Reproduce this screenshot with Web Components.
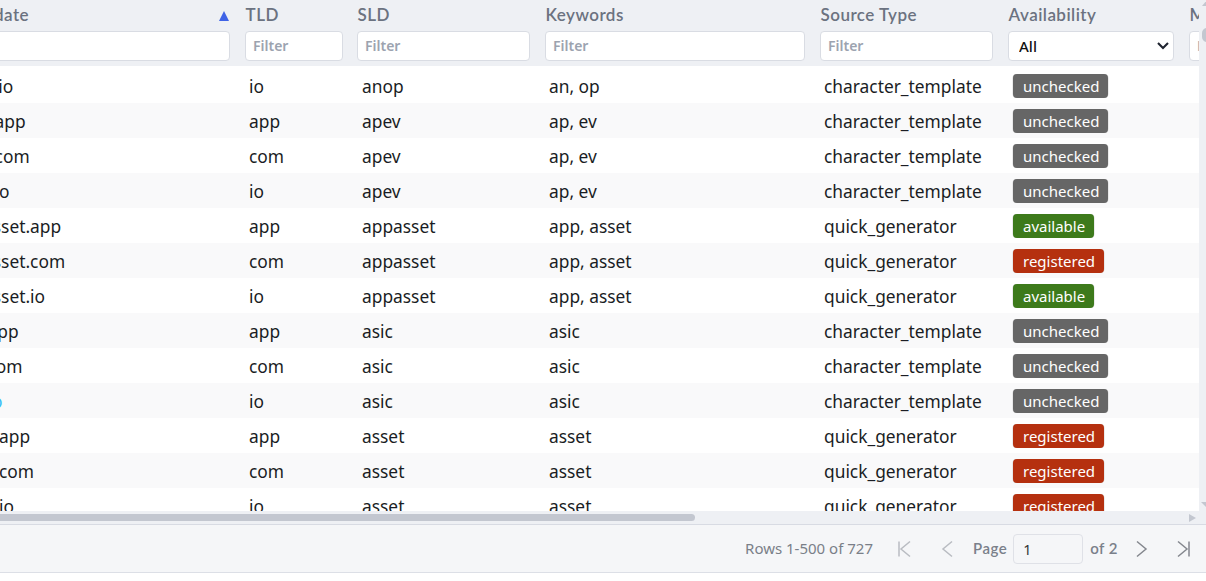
<!DOCTYPE html>
<html lang="en">
<head>
<meta charset="utf-8">
<title>Domain candidates</title>
<style>
html,body{margin:0;padding:0;background:#fff;overflow:hidden}
body{width:1206px;height:581px;font-family:"Noto Sans","Open Sans",sans-serif}
</style>
</head>
<body>
<x-app></x-app>
<script>
const COLS='297px 112px 188px 275px 188px 181px 220px';
const HEADFONT='"Lato","Noto Sans",sans-serif';

class XBadge extends HTMLElement{
  constructor(){super();const s=this.attachShadow({mode:'open'});
  s.innerHTML=`<style>
  :host{display:inline-flex;align-items:center;height:24px;padding:0 9px 0 10px;border-radius:4px;color:#fff;font-size:15px;line-height:24px;background:#666;box-sizing:border-box;box-shadow:0 0 0 .5px #d8d8d8}
  :host([kind=available]){background:#3d7a1b}
  :host([kind=registered]){background:#b5300f}
  </style><slot></slot>`;}
}
customElements.define('x-badge',XBadge);

class XRow extends HTMLElement{
  constructor(){super();this.attachShadow({mode:'open'});}
  connectedCallback(){
    const g=n=>this.getAttribute(n)||'';
    const st=g('status');
    this.shadowRoot.innerHTML=`<style>
    :host{display:grid;grid-template-columns:${COLS};height:35px;align-items:center;background:#fff;color:#1a1d24;font-size:17.35px}
    :host(:nth-child(even)){background:#f9f9fa}
    .c{padding:1px 0 0 11px;white-space:nowrap;overflow:hidden;line-height:24px}
    .hl{color:#38bdf8}
    .s{padding-left:12px}
    .b{padding-left:12px;display:flex;padding-top:0}
    </style>
    <div class="c ${g('hl')?'hl':''}">${g('domain')}</div>
    <div class="c">${g('tld')}</div>
    <div class="c s">${g('sld')}</div>
    <div class="c">${g('kw')}</div>
    <div class="c">${g('src')}</div>
    <div class="c b"><x-badge kind="${st}">${st}</x-badge></div>
    <div class="c"></div>`;
  }
}
customElements.define('x-row',XRow);

class XHeadCell extends HTMLElement{
  constructor(){super();this.attachShadow({mode:'open'});}
  connectedCallback(){
    const label=this.getAttribute('label'),sel=this.hasAttribute('select'),sort=this.hasAttribute('sorted');
    const ph=this.hasAttribute('noph')?'':'Filter';
    this.shadowRoot.innerHTML=`<style>
    :host{display:flex;flex-direction:column;padding:0 8px 0 7px;box-sizing:border-box;min-width:0;overflow:hidden}
    :host([label=TLD]){padding-right:7px}
    .t{display:flex;justify-content:space-between;align-items:center;height:30px;margin-bottom:1px;padding-left:.6px;font:600 17px/30px ${HEADFONT};letter-spacing:.45px;color:#6b7280;white-space:nowrap}
    .tri{width:0;height:0;border-left:5.5px solid transparent;border-right:5.5px solid transparent;border-bottom:10px solid #3f63e6;margin-right:1px;margin-top:1px}
    .f{position:relative;height:30px}
    input,select{display:block;width:100%;height:30px;box-sizing:border-box;border:1px solid #d9dce3;border-radius:4px;background:#fff;padding:0 7px 2px;font:600 14px "Noto Sans",sans-serif;outline:0;margin:0}
    input::placeholder{color:#9ca3af;opacity:1}
    select{appearance:none;-webkit-appearance:none;color:#111;padding:0 0 0 10px;font-size:15px;font-weight:500}
    svg{position:absolute;right:4px;top:10px;pointer-events:none}
    </style>
    <div class="t"><span>${label}</span>${sort?'<span class="tri"></span>':''}</div>
    <div class="f">${sel?`<select><option>All</option></select><svg width="14" height="10" viewBox="0 0 14 10"><path d="M2 2l5 5 5-5" fill="none" stroke="#1f2430" stroke-width="2.1"/></svg>`:`<input placeholder="${ph}">`}</div>`;
  }
}
customElements.define('x-head-cell',XHeadCell);

class XTable extends HTMLElement{
  constructor(){super();this.attachShadow({mode:'open'});}
  connectedCallback(){
    const ct='character_template',qg='quick_generator';
    const rows=[
     ['anop.io','io','anop','an, op',ct,'unchecked'],
     ['apev.app','app','apev','ap, ev',ct,'unchecked'],
     ['apev.com','com','apev','ap, ev',ct,'unchecked'],
     ['apev.io','io','apev','ap, ev',ct,'unchecked'],
     ['appasset.app','app','appasset','app, asset',qg,'available'],
     ['appasset.com','com','appasset','app, asset',qg,'registered'],
     ['appasset.io','io','appasset','app, asset',qg,'available'],
     ['asic.app','app','asic','asic',ct,'unchecked'],
     ['asic.com','com','asic','asic',ct,'unchecked'],
     ['asic.io','io','asic','asic',ct,'unchecked',1],
     ['asset.app','app','asset','asset',qg,'registered'],
     ['asset.com','com','asset','asset',qg,'registered'],
     ['asset.io','io','asset','asset',qg,'registered']];
    this.shadowRoot.innerHTML=`<style>
    :host{display:block;flex:0 0 1199px;width:1199px;height:511px;overflow:hidden;background:#fff}
    .in{width:1461px;margin-left:-59px}
    .head{display:grid;grid-template-columns:${COLS};height:66px;background:#eef0f4}
    .sp{height:2px}
    </style>
    <div class="in">
      <div class="head">
        <x-head-cell label="Candidate" sorted noph></x-head-cell>
        <x-head-cell label="TLD"></x-head-cell>
        <x-head-cell label="SLD"></x-head-cell>
        <x-head-cell label="Keywords"></x-head-cell>
        <x-head-cell label="Source Type"></x-head-cell>
        <x-head-cell label="Availability" select></x-head-cell>
        <x-head-cell label="Metadata"></x-head-cell>
      </div>
      <div class="sp"></div>
      <div>${rows.map(r=>`<x-row domain="${r[0]}" tld="${r[1]}" sld="${r[2]}" kw="${r[3]}" src="${r[4]}" status="${r[5]}" ${r[6]?'hl="1"':''}></x-row>`).join('')}</div>
    </div>`;
  }
}
customElements.define('x-table',XTable);

class XVScroll extends HTMLElement{
  constructor(){super();const s=this.attachShadow({mode:'open'});
  s.innerHTML=`<style>
  :host{display:flex;flex-direction:column;flex:0 0 7px;height:511px;background:#eef0f4;overflow:hidden;position:relative}
  .up{position:absolute;left:3px;top:0;width:0;height:0;border-left:5px solid transparent;border-right:5px solid transparent;border-bottom:6px solid #c3c7d0}
  .th{position:absolute;left:3px;top:28px;width:14px;height:14px;border-radius:5px;background:#c3c7d0}
  .dn{position:absolute;left:2px;top:502px;width:0;height:0;border-left:5px solid transparent;border-right:5px solid transparent;border-top:5px solid #c3c7d0}
  </style><div class="up"></div><div class="th"></div><div class="dn"></div>`;}
}
customElements.define('x-vscroll',XVScroll);

class XHScroll extends HTMLElement{
  constructor(){super();const s=this.attachShadow({mode:'open'});
  s.innerHTML=`<style>
  :host{display:flex;align-items:center;justify-content:space-between;height:14px;box-sizing:border-box;background:#eef0f4;border-bottom:1px solid #d8dbe3;padding:0 10px 0 0}
  .th{width:695px;height:7px;border-radius:0 4px 4px 0;background:#c3c7d0}
  .ar{width:0;height:0;border-top:4.5px solid transparent;border-bottom:4.5px solid transparent;border-left:7px solid #c3c7d0;margin-top:1px}
  </style><div class="th"></div><div class="ar"></div>`;}
}
customElements.define('x-hscroll',XHScroll);

class XPager extends HTMLElement{
  constructor(){super();const s=this.attachShadow({mode:'open'});
  s.innerHTML=`<style>
  :host{display:flex;align-items:center;justify-content:flex-end;height:48px;box-sizing:border-box;background:#f5f6f8;border-bottom:1px solid #dcdfe6;padding-right:15px;color:#6b7280}
  .r{font-size:15px;color:#7a7f88;margin-top:-1px}
  .l{font:600 15px ${HEADFONT};letter-spacing:.5px;color:#7a808a;margin-top:-2px}
  svg{display:block;width:16px;height:18px;flex:none}
  .off{stroke:#b9bcc2}.on{stroke:#84878e}
  path{fill:none;stroke-width:1.5}
  input{width:70px;height:30px;box-sizing:border-box;border:1px solid #dfe1e7;border-radius:4px;background:#f5f6f8;font:14.5px "Noto Sans",sans-serif;color:#333;padding:0 9px;outline:0;margin:0 0 0 6px}
  </style>
  <span class="r">Rows 1-500 of 727</span>
  <svg class="off" style="margin-left:23px" viewBox="0 0 16 18"><path d="M3 1.5v15M14 1.5L5 9l9 7.5"/></svg>
  <svg class="off" style="margin-left:28px" viewBox="0 0 16 18"><path d="M12 1.5L3 9l9 7.5"/></svg>
  <span class="l" style="margin-left:17px">Page</span>
  <input value="1" aria-label="Page">
  <span class="l" style="margin-left:7px">of 2</span>
  <svg class="on" style="margin-left:15px" viewBox="0 0 16 18"><path d="M4 1.5L13 9l-9 7.5"/></svg>
  <svg class="on" style="margin-left:26px" viewBox="0 0 16 18"><path d="M3 1.5L12 9l-9 7.5M14 1.5v15"/></svg>`;}
}
customElements.define('x-pager',XPager);

class XApp extends HTMLElement{
  constructor(){super();const s=this.attachShadow({mode:'open'});
  s.innerHTML=`<style>
  :host{display:flex;flex-direction:column;width:1206px;height:581px;overflow:hidden;background:#fff}
  .top{display:flex;height:511px}
  </style>
  <div class="top"><x-table></x-table><x-vscroll></x-vscroll></div>
  <x-hscroll></x-hscroll>
  <x-pager></x-pager>`;}
}
customElements.define('x-app',XApp);
</script>
</body>
</html>
